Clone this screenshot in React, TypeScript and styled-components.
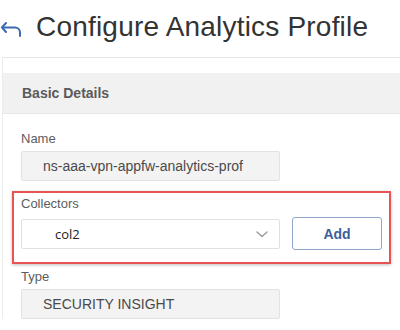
import React from 'react';
import styled, { createGlobalStyle } from 'styled-components';

const GlobalStyle = createGlobalStyle`
  html, body {
    margin: 0;
    padding: 0;
    background: #ffffff;
    font-family: "Liberation Sans", Arial, sans-serif;
    overflow: hidden;
  }
`;

const Page = styled.div`
  width: 400px;
  height: 330px;
  overflow: hidden;
`;

const TitleBar = styled.div`
  display: flex;
  align-items: center;
  gap: 12px;
  height: 57px;
  box-sizing: border-box;
  padding-bottom: 4px;
`;

const BackIcon = styled.svg`
  width: 24px;
  height: 20px;
  flex-shrink: 0;
  margin-top: 4px;
`;

const Title = styled.h1`
  margin: 0;
  font-size: 28px;
  font-weight: 400;
  color: #333333;
  letter-spacing: 0.2px;
  white-space: nowrap;
`;

const Panel = styled.div`
  margin-left: 2px;
  border-top: 1px solid #e6e6e6;
  border-left: 1px solid #ececec;
  padding-top: 15px;
`;

const PanelHeader = styled.div`
  height: 40px;
  background: #f1f1f1;
  border-bottom: 1px solid #e8e8e8;
  display: flex;
  align-items: center;
  padding-left: 19px;
  font-size: 14px;
  font-weight: 700;
  color: #5a5a5a;
`;

const Body = styled.div`
  padding: 17px 0 0 18px;
  display: flex;
  flex-direction: column;
`;

const Field = styled.div<{ $gap?: number }>`
  display: flex;
  flex-direction: column;
  gap: 5px;
  margin-bottom: ${({ $gap }) => $gap ?? 0}px;
`;

const Label = styled.div`
  font-size: 13px;
  color: #5c5c5c;
  line-height: 15px;
`;

const ReadOnlyInput = styled.div`
  width: 259px;
  height: 30px;
  box-sizing: border-box;
  background: #f3f3f3;
  border: 1px solid #e2e2e2;
  border-radius: 2px;
  display: flex;
  align-items: center;
  padding-left: 21px;
  font-size: 14px;
  color: #4a4a4a;
  white-space: nowrap;
  overflow: hidden;
`;

const Highlight = styled.div`
  margin-left: -9px;
  width: 379px;
  height: 73px;
  box-sizing: border-box;
  border: 2px solid #e85454;
  box-shadow: 0 1px 3px rgba(0, 0, 0, 0.25);
  padding: 3px 0 0 7px;
  display: flex;
  flex-direction: column;
  gap: 6px;
  margin-bottom: 5px;
`;

const Row = styled.div`
  display: flex;
  align-items: center;
  gap: 12px;
`;

const Select = styled.div`
  width: 259px;
  height: 30px;
  box-sizing: border-box;
  background: #ffffff;
  border: 1px solid #e0e0e0;
  border-radius: 2px;
  display: flex;
  align-items: center;
  justify-content: space-between;
  padding: 0 10px 0 33px;
  font-family: "Open Sans", "Noto Sans", sans-serif;
  font-size: 13px;
  color: #222222;
`;

const Chevron = styled.svg`
  width: 14px;
  height: 14px;
`;

const AddButton = styled.button`
  width: 90px;
  height: 33px;
  box-sizing: border-box;
  background: #ffffff;
  border: 1px solid #8ea6cc;
  border-radius: 3px;
  font-family: "Liberation Sans", Arial, sans-serif;
  font-size: 14px;
  font-weight: 700;
  color: #3c5f9c;
  cursor: pointer;
`;

export default function App() {
  return (
    <Page>
      <GlobalStyle />
      <TitleBar>
        <BackIcon viewBox="0 0 24 20" fill="none" stroke="#3d68b0" strokeWidth="2" strokeLinecap="round" strokeLinejoin="round">
          <path d="M6 4 2 8.5 6 13" />
          <path d="M2.5 8.5H15a5 5 0 0 1 5 5V17" />
        </BackIcon>
        <Title>Configure Analytics Profile</Title>
      </TitleBar>
      <Panel>
        <PanelHeader>Basic Details</PanelHeader>
        <Body>
          <Field $gap={10}>
            <Label>Name</Label>
            <ReadOnlyInput>ns-aaa-vpn-appfw-analytics-prof</ReadOnlyInput>
          </Field>
          <Highlight>
            <Label>Collectors</Label>
            <Row>
              <Select>
                col2
                <Chevron viewBox="0 0 14 14" fill="none" stroke="#9a9a9a" strokeWidth="1.4" strokeLinecap="round" strokeLinejoin="round">
                  <path d="M2 5l5 4.5L12 5" />
                </Chevron>
              </Select>
              <AddButton>Add</AddButton>
            </Row>
          </Highlight>
          <Field>
            <Label>Type</Label>
            <ReadOnlyInput>SECURITY INSIGHT</ReadOnlyInput>
          </Field>
        </Body>
      </Panel>
    </Page>
  );
}
